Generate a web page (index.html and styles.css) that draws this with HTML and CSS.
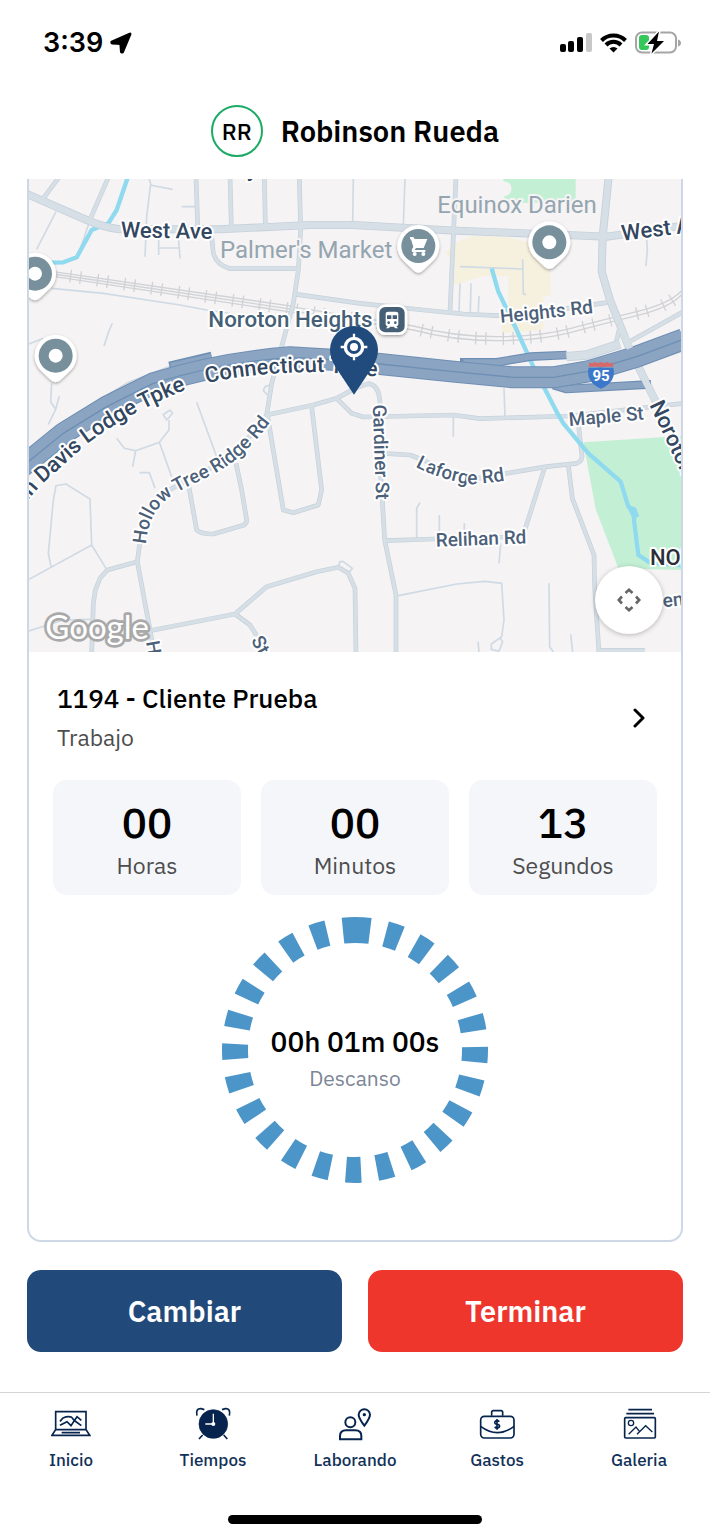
FILE: index.html
```html
<!DOCTYPE html>
<html lang="es">
<head>
<meta charset="utf-8">
<meta name="viewport" content="width=device-width, initial-scale=1">
<title>Laborando</title>
<link rel="stylesheet" href="styles.css">
</head>
<body>
<div class="app">
  <div class="status-bar">
    <div class="status-time">
      <span>3:39</span>
      <svg width="22" height="22" viewBox="0 0 22 22" aria-hidden="true"><path d="M20 2 12.500 20 11.500 20 10.800 11.400 2 11 1.800 10.200Z" fill="#000" stroke="#000" stroke-width="3" stroke-linejoin="round"/></svg>
    </div>
    <svg width="122" height="24" viewBox="559 31 122 24" aria-hidden="true">
      <rect x="560" y="44" width="6" height="8" rx="2"/>
      <rect x="568" y="41" width="6" height="11" rx="2"/>
      <rect x="577" y="37" width="6" height="15" rx="2"/>
      <rect x="586" y="33" width="6" height="19" rx="2" fill="#c8c8c8"/>
      <g fill="none" stroke="#000" stroke-width="4">
        <path d="M601.500 40.500a17 17 0 0 1 24 0"/>
        <path d="M606 45a10.500 10.500 0 0 1 15 0"/>
      </g>
      <path d="M609.500 48.500a6 6 0 0 1 8 0l-4 4Z"/>
      <rect x="636" y="32.500" width="40" height="20" rx="6" fill="#fff" stroke="#a5a5a5" stroke-width="2"/>
      <path d="M678 39.500q3 1 3 3.500t-3 3.500Z" fill="#a5a5a5"/>
      <rect x="639" y="35" width="10" height="15" rx="3" fill="#34c759"/>
      <path d="M659 31.500 647.500 44h6.500l-2.500 9.500L664 41h-7Z" stroke="#fff" stroke-width="3" paint-order="stroke"/>
    </svg>
  </div>

  <header class="profile">
    <span class="avatar">RR</span>
    <h1 class="profile-name">Robinson Rueda</h1>
  </header>

  <main class="content">
    <section class="card">
      <div class="map">
        <svg class="map-canvas" viewBox="27 27 1956 1419" role="img" aria-label="Mapa de Noroton Heights">
          <defs>
            <g id="avenues">
              <path d="M0 63 27 75 200 150Q250 172 300 178H600L870 165H1000L1310 182 1640 195 1760 200 1983 168"/>
              <path d="M1766 20 1748 200 1745 305 1770 390 1830 540 1905 690 1990 860"/>
            </g>
            <g id="streets">
              <path d="M118 20 70 85M266 20 205 160M528 20 533 165M630 20 634 168M733 20 736 165M838 20 842 180 835 300 820 400 785 530 755 640 740 735M1308 20 1290 425"/>
              <path d="M575 200 580 250Q590 285 630 296H832M830 373 1020 400 1210 420 1330 432 1430 437 1540 430 1760 398"/>
              <path d="M740 735Q690 810 600 880 500 930 430 970 370 1020 358 1130L352 1175 390 1380 402 1450"/>
              <path d="M352 1175 262 1200 240 1225 226 1260 220 1300 215 1450"/>
              <path d="M740 735 880 705 950 685 1005 655 1045 641Q1078 645 1080 700L1078 850 1087 990 1094 1110 1128 1275V1450"/>
              <path d="M950 685 995 730 1030 741 1300 735 1380 746 1650 738 1990 700"/>
              <path d="M875 710 905 960 895 1005 820 1028 790 1020 742 735"/>
              <path d="M505 940 530 1080Q545 1093 580 1092L670 1066Q681 1060 680 1050L665 960 648 880"/>
              <path d="M1090 850 1170 855 1210 870 1300 915 1390 925 1460 910 1580 890 1670 880Q1690 872 1685 850L1675 760"/>
              <path d="M1575 890 1513 1085M1094 1112 1240 1107 1510 1100M1645 885 1657 985 1722 1155 1724 1250 1737 1450M1737 1441H1875"/>
              <path d="M390 1382 645 1332 740 1250 890 1205 955 1192 985 1210 1005 1255 1008 1450M645 1332 690 1365 712 1400"/>
              <path d="M1797 480 1787 525M1820 520 1990 425M27 842 130 760 330 640 460 590"/>
            </g>
            <g id="marker">
              <path d="M0 80Q-9 80-18 70L-46 43A63 63 0 1 1 46 43L18 70Q9 80 0 80Z" fill="#fff" filter="url(#soft)"/>
              <circle r="51" fill="#78909c"/>
            </g>
            <filter id="soft" x="-30%" y="-30%" width="160%" height="160%"><feDropShadow dx="0" dy="4" stdDeviation="4" flood-color="#000" flood-opacity=".35"/></filter>
            <path id="curve-tpke" d="M-135 1170 15 1000 65 943 200 822Q330 725 499 659"/>
            <path id="curve-conn" d="M560 640Q700 606 912 606L1120 624"/>
            <path id="curve-hollow" d="M378 1123C388 1000 455 972 545 930S680 850 760 745"/>
            <path id="curve-laforge" d="M1186 890Q1250 925 1345 943 1400 942 1480 928"/>
          </defs>

          <rect x="27" y="27" width="1956" height="1419" fill="#f5f3f4"/>
          <path d="M1450 20H1667V95L1450 100 1452 80Q1477 75 1474 50 1470 35 1450 34Z" fill="#c3f0d4"/>
          <path d="M1690 817 1983 798V1200L1795 1195 1727 1017Z" fill="#c3f0d4"/>
          <path d="M1305 220 1355 198 1460 200 1530 218 1590 300 1593 375 1570 380V480L1445 490 1440 420 1465 415V318H1390L1302 345 1305 275 1275 250Z" fill="#f6f0de"/>

          <g class="lane">
            <path d="M108 125 50 238M205 165 175 255M387 27 392 40 380 140 375 260M390 45 458 58M485 110H525M416 205V255M416 234H478M475 200 480 265M1000 27 998 160M1155 27 1150 165"/>
            <path d="M95 355 250 370 480 405 560 420 640 432M277 460 268 480 252 528M27 522 70 505M95 640 92 695 107 718 85 763M107 718 118 678"/>
            <path d="M27 1228 215 1125 210 987 138 942 108 947 100 990 85 1150 93 1190M215 1125 258 1195M27 1383 130 1350 212 1348"/>
            <path d="M290 805 313 835 347 842 338 890M347 842 418 817 447 780V750M418 817 455 920M358 908H388L405 955M430 735 440 750 458 730 450 720 428 735M530 697 590 860"/>
            <path d="M750 645 735 650 730 662 742 675M955 1190 960 1175H970L997 1195 985 1210"/>
            <path d="M1300 740V800M1452 655 1455 740M1190 1105V1015L1200 998M1258 1035V1090M1333 1060V1090M1442 1120 1437 1180"/>
            <path d="M1135 1277 1310 1242 1395 1234 1445 1240 1452 1350 1445 1400 1414 1422V1438L1437 1444 1448 1415 1440 1405M1587 1240 1589 1430 1600 1446M1652 1393 1658 1446M1374 1415 1377 1446"/>
            <path d="M1320 290 1508 297M1508 268 1510 372 1518 374M1320 340 1317 425M1353 340 1351 425M1377 378 1375 425M1880 205 1882 240 1878 288"/>
          </g>

          <path class="river" d="M324 20 290 120 265 160 215 180 170 262 130 277 95 278"/>
          <g class="rail">
            <path d="M100 305 825 410M100 312 825 419M100 319 825 428"/>
            <path d="M825 412 1180 468Q1300 500 1430 500T1650 476 1850 425 1990 355M825 424 1180 480Q1300 512 1430 512T1650 488 1850 437 1990 367"/>
            <path class="rail-ties" d="M150 318 825 419 1180 474Q1300 506 1430 506T1650 482 1850 431 1990 361"/>
          </g>

          <use href="#streets" class="street-edge"/>
          <use href="#avenues" class="avenue-edge"/>
          <use href="#streets" class="street-fill"/>
          <use href="#avenues" class="avenue-fill"/>
          <path class="river" d="M1415 295 1435 365 1490 480 1540 590 1615 735 1630 760 1705 850 1802 935 1825 1010 1845 1022 1842 1050 1855 1155 1890 1178 1983 1186"/>
          <path d="M1822 1012 1845 1010 1858 1038 1838 1048Z" fill="#8fdaee"/>

          <g fill="none" stroke-linejoin="round">
            <path d="M1320 577H1430L1530 560 1640 555M1600 645 1640 657 1893 643M448 588 575 558" stroke="#6e8fb4" stroke-width="26"/>
            <path d="M1330 577H1430L1530 560 1640 555M1600 645 1640 657 1890 643M452 588 575 560" stroke="#8ba4c2" stroke-width="19"/>
            <path d="M1640 560 1700 555 1800 522" stroke="#c8d2db" stroke-width="28"/>
            <path d="M1640 560 1700 555 1800 522" stroke="#d6dfe6" stroke-width="23"/>
            <path d="M0 895 130 790 260 710 400 640Q600 578 810 562L950 570 1080 582 1300 605 1480 622H1600L1700 605 1850 560 1990 508" stroke="#6e8fb4" stroke-width="66"/>
            <path d="M0 895 130 790 260 710 400 640Q600 578 810 562L950 570 1080 582 1300 605 1480 622H1600L1700 605 1850 560 1990 508" stroke="#8ba4c2" stroke-width="60"/>
            <path d="M0 895 130 790 260 710 400 640Q600 578 810 562L950 570 1080 582 1300 605 1480 622H1600L1700 605 1850 560 1990 508" stroke="#6e8fb4" stroke-width="4"/>
            <path d="M1815 500 1830 535" stroke="#d6dfe6" stroke-width="20"/>
            <path d="M1864 608 1905 690" stroke="#d6dfe6" stroke-width="20"/>
          </g>

          <g class="label label-major">
            <text x="302" y="202" transform="rotate(1 302 202)">West Ave</text>
            <text x="1807" y="212" transform="rotate(-7 1807 212)">West Ave</text>
            <text text-anchor="end"><textPath href="#curve-tpke" startOffset="100%">John Davis Lodge Tpke</textPath></text>
            <text><textPath href="#curve-conn">Connecticut Tpke</textPath></text>
            <text x="1888" y="704" transform="rotate(65 1888 704)">Noroton Ave</text>
            <text x="680" y="18">y</text>
          </g>
          <text class="label label-station" x="565" y="472">Noroton Heights</text>
          <g class="label label-street">
            <text x="1442" y="459" transform="rotate(-6 1442 459)">Heights Rd</text>
            <text x="1648" y="768" transform="rotate(-5 1648 768)">Maple St</text>
            <text x="1058" y="704" transform="rotate(88 1058 704)">Gardiner St</text>
            <text><textPath href="#curve-laforge">Laforge Rd</textPath></text>
            <text x="1248" y="1130" transform="rotate(-2 1248 1130)">Relihan Rd</text>
            <text><textPath href="#curve-hollow">Hollow Tree Ridge Rd</textPath></text>
            <text x="378" y="1416" transform="rotate(80 378 1416)">Hollow</text>
            <text x="692" y="1410" transform="rotate(62 692 1410)">St</text>
            <text x="1930" y="1312" transform="rotate(-6 1930 1312)">en</text>
          </g>
          <text class="label label-town" x="1890" y="1185">NOROTON</text>
          <g class="label label-place">
            <text x="600" y="263">Palmer's Market</text>
            <text x="1252" y="130">Equinox Darien</text>
          </g>

          <use href="#marker" x="107" y="557"/><circle cx="107" cy="557" r="21" fill="#fff"/>
          <use href="#marker" x="45" y="311"/><circle cx="45" cy="311" r="21" fill="#fff"/>
          <use href="#marker" x="1588" y="217"/><circle cx="1588" cy="217" r="21" fill="#fff"/>
          <use href="#marker" x="1195" y="228"/>
          <g fill="#fff">
            <path d="M1170 201H1180L1184 207H1222L1211 234H1188L1184 240H1216V246H1177Q1172 243 1180 231L1173 208H1170Z"/>
            <circle cx="1184" cy="252" r="6"/><circle cx="1210" cy="252" r="6"/>
          </g>

          <rect x="1074" y="407" width="84" height="84" rx="22" fill="#455f76" stroke="#fff" stroke-width="8" filter="url(#soft)"/>
          <path d="M1097 432Q1097 425 1105 425H1127Q1135 425 1135 432V463Q1135 468 1129 469L1134 475H1126L1121 470H1111L1106 475H1098L1103 469Q1097 468 1097 463Z" fill="#fff"/>
          <path d="M1101 436H1114V447H1101ZM1118 436H1131V447H1118Z" fill="#455f76"/>
          <circle cx="1106" cy="458" r="4" fill="#455f76"/><circle cx="1126" cy="458" r="4" fill="#455f76"/>

          <path d="M1708 577Q1716 583 1724 575 1735 583 1743 575 1751 583 1762 575 1770 583 1778 577L1780 590H1706Z" fill="#d8696b"/>
          <path d="M1706 593H1780Q1790 635 1743 656 1696 635 1706 593Z" fill="#3b78cc"/>
          <text class="shield" x="1743" y="634">95</text>

          <path d="M1002 674 946 590Q930 565 930 540A72 72 0 0 1 1074 540Q1074 565 1058 590Z" fill="#204b7c"/>
          <g fill="none" stroke="#fff">
            <circle cx="1002" cy="531" r="26" stroke-width="10"/>
            <path d="M1002 491V510M1002 552V571M962 531H981M1023 531H1042" stroke-width="7"/>
          </g>
          <circle cx="1002" cy="531" r="12" fill="#fff"/>

          <text class="google" x="76" y="1406">Google</text>
        </svg>
        <button class="map-control" type="button" aria-label="Mover el mapa">
          <svg width="24" height="24" viewBox="0 0 24 24" fill="none" stroke="#666" stroke-width="2.600" aria-hidden="true"><path d="M8.500 5 12 1.800 15.500 5M8.500 19 12 22.200 15.500 19M5 8.500 1.800 12 5 15.500M19 8.500 22.200 12 19 15.500"/></svg>
        </button>
      </div>

      <a class="client" href="#cliente">
        <span class="client-text">
          <span class="client-name">1194 - Cliente Prueba</span>
          <span class="client-kind">Trabajo</span>
        </span>
        <svg width="12" height="20" viewBox="0 0 12 20" fill="none" stroke="#000" stroke-width="3" stroke-linecap="round" stroke-linejoin="round" aria-hidden="true"><path d="M2 2 10 10 2 18"/></svg>
      </a>

      <div class="stats">
        <div class="stat"><span class="stat-value">00</span><span class="stat-label">Horas</span></div>
        <div class="stat"><span class="stat-value">00</span><span class="stat-label">Minutos</span></div>
        <div class="stat"><span class="stat-value">13</span><span class="stat-label">Segundos</span></div>
      </div>

      <div class="break-timer">
        <svg class="ring" viewBox="0 0 266 266" aria-hidden="true">
          <circle cx="133" cy="133" r="120" pathLength="360" transform="rotate(-90 133 133)" fill="none" stroke="#4c95c9" stroke-width="26" stroke-dasharray="7.200 7.560"/>
        </svg>
        <div class="break-text">
          <span class="break-value">00h 01m 00s</span>
          <span class="break-label">Descanso</span>
        </div>
      </div>
    </section>

    <div class="actions">
      <button class="action action-change" type="button">Cambiar</button>
      <button class="action action-finish" type="button">Terminar</button>
    </div>
  </main>

  <nav class="tabs">
    <a class="tab" href="#inicio">
      <svg class="tab-icon" viewBox="152 50 120 102" stroke-width="5">
        <path d="M166 118V64H257V118M166 118H257L268 135H155ZM184 127H239"/>
        <path d="M179 93 188 83Q204 76 214 81L222 91 212 106 200 94 179 105M222 91 230 79 243 90M224 92 243 106"/>
      </svg>
      <span>Inicio</span>
    </a>
    <a class="tab" href="#tiempos">
      <svg class="tab-icon" viewBox="579 50 120 102" stroke-width="5">
        <circle cx="640" cy="101" r="43" fill="#06244d" stroke-width="2"/>
        <path d="M591 76Q586 54 603 55L613 58M688 76Q693 54 676 55L666 58M608 134 597 146M671 134 682 146"/>
        <path d="M640 70V101H616" stroke="#fff" stroke-width="4"/>
        <circle cx="640" cy="101" r="6" fill="#fff" stroke="none"/>
      </svg>
      <span>Tiempos</span>
    </a>
    <a class="tab" href="#laborando">
      <svg class="tab-icon" viewBox="1005 50 120 102" stroke-width="6">
        <circle cx="1051" cy="96" r="15"/>
        <path d="M1020 147V137Q1020 120 1038 120H1066Q1084 120 1084 137V147Z"/>
        <path d="M1093 106Q1076 83 1076 73A17 16 0 0 1 1110 73Q1110 83 1093 106Z"/>
        <circle cx="1093" cy="73" r="5" fill="#06244d" stroke="none"/>
      </svg>
      <span>Laborando</span>
    </a>
    <a class="tab" href="#gastos">
      <svg class="tab-icon" viewBox="381 50 120 102" stroke-width="5">
        <rect x="392" y="78" width="100" height="65" rx="11"/>
        <path d="M425 76V66Q425 61 430 61H453Q458 61 458 66V76M392 108Q442 146 492 108"/>
        <path d="M448 94Q441 88 435 94 432 101 442 102 451 104 448 110 441 116 434 110M441 86V118"/>
      </svg>
      <span>Gastos</span>
    </a>
    <a class="tab" href="#galeria">
      <svg class="tab-icon" viewBox="807 50 120 102" stroke-width="5">
        <rect x="824" y="82" width="92" height="61" rx="3"/>
        <path d="M835 58H906M829 70H912"/>
        <circle cx="843" cy="98" r="8" stroke-width="4"/>
        <path d="M836 132 858 110 869 124M861 132 887 106 907 125" stroke-width="4"/>
      </svg>
      <span>Galeria</span>
    </a>
  </nav>
  <div class="home-indicator"></div>
</div>
</body>
</html>
```
FILE: styles.css
```css
* { box-sizing: border-box; }

body {
  margin: 0;
  background: #fff;
  color: #000;
  font-family: "IBM Plex Sans", Roboto, "Noto Sans", sans-serif;
}

.app {
  display: flex;
  flex-direction: column;
  min-height: 100vh;
}

.status-bar {
  display: flex;
  align-items: center;
  justify-content: space-between;
  height: 84px;
  padding: 2px 29px 0 43px;
  font: 600 27px/32px Inter, sans-serif;
}

.status-time {
  display: flex;
  align-items: center;
  gap: 7px;
}

.profile {
  display: flex;
  align-items: center;
  justify-content: center;
  gap: 18px;
  height: 95px;
  padding-bottom: 2px;
}

.avatar {
  display: flex;
  align-items: center;
  justify-content: center;
  width: 52px;
  height: 52px;
  border: 2px solid #1bab66;
  border-radius: 50%;
  font-size: 23px;
  font-weight: 500;
}

.profile-name {
  margin: 0;
  font-size: 29px;
  font-weight: 600;
  line-height: 36px;
}

.content {
  flex: 1;
  padding: 0 27px 40px;
}

.card {
  border: 2px solid #cdd8e6;
  border-top: 0;
  border-radius: 0 0 14px 14px;
}

.map {
  position: relative;
  overflow: hidden;
}

.map-canvas {
  display: block;
  width: 100%;
  height: auto;
}

.map-control {
  position: absolute;
  right: 18px;
  bottom: 18px;
  display: flex;
  align-items: center;
  justify-content: center;
  width: 68px;
  height: 68px;
  padding: 0;
  border: 0;
  border-radius: 50%;
  background: #fff;
  box-shadow: 0 1px 5px rgba(0, 0, 0, .25);
}

.lane { fill: none; stroke: #cfdae4; stroke-width: 5; }
.river { fill: none; stroke: #8fdaee; stroke-width: 13; stroke-linejoin: round; }
.rail { fill: none; stroke: #d0d2d5; stroke-width: 4; }
.rail .rail-ties { stroke-width: 38; stroke-dasharray: 4 26 4 48; }
.street-edge, .avenue-edge, .street-fill, .avenue-fill { fill: none; stroke-linejoin: round; }
.street-edge { stroke: #c5d1db; stroke-width: 14; }
.street-fill { stroke: #d6dfe6; stroke-width: 10; }
.avenue-edge { stroke: #c5d1db; stroke-width: 24; }
.avenue-fill { stroke: #d6dfe6; stroke-width: 19; }

.label {
  font-family: Roboto, sans-serif;
  font-weight: 500;
  stroke: #fff;
  stroke-width: 12px;
  stroke-linejoin: round;
  paint-order: stroke;
}
.label-major { font-size: 66px; fill: #334760; }
.label-station { font-size: 67px; fill: #455f76; }
.label-street { font-size: 57px; fill: #4c6079; }
.label-town { font-size: 66px; fill: #2b3038; }
.label-place { font-size: 72px; font-weight: 400; fill: #94a5b0; stroke: #f5f3f4; }
.shield { font: 700 45px Roboto, sans-serif; fill: #fff; text-anchor: middle; }
.google {
  font: 400 99px Lato, sans-serif;
  fill: #fff;
  stroke: #a9a9a9;
  stroke-width: 16px;
  stroke-linejoin: round;
  paint-order: stroke;
}

.client {
  display: flex;
  align-items: center;
  justify-content: space-between;
  padding: 28px 36px 25px 28px;
  color: inherit;
  text-decoration: none;
}

.client-text {
  display: flex;
  flex-direction: column;
  gap: 3px;
}

.client-name {
  font-size: 26px;
  font-weight: 500;
  line-height: 36px;
}

.client-kind {
  color: #4d4d4d;
  font-size: 23px;
  line-height: 36px;
}

.stats {
  display: grid;
  grid-template-columns: repeat(3, 1fr);
  gap: 20px;
  padding: 0 24px;
}

.stat {
  display: flex;
  flex-direction: column;
  align-items: center;
  padding: 17px 8px 14px;
  border-radius: 14px;
  background: #f4f6fa;
}

.stat-value {
  font-size: 42px;
  font-weight: 500;
  line-height: 52px;
}

.stat-label {
  color: #4d4d4d;
  font-size: 23px;
  line-height: 32px;
}

.break-timer {
  display: grid;
  place-items: center;
  padding: 22px 0 57px;
}

.ring, .break-text { grid-area: 1 / 1; }

.ring {
  width: 266px;
  height: 266px;
}

.break-text {
  display: flex;
  flex-direction: column;
  align-items: center;
  padding-top: 16px;
}

.break-value {
  font-size: 28px;
  font-weight: 500;
  line-height: 40px;
}

.break-label {
  color: #7c8696;
  font-size: 21px;
  line-height: 32px;
}

.actions {
  display: grid;
  grid-template-columns: 1fr 1fr;
  gap: 26px;
  margin-top: 28px;
}

.action {
  height: 82px;
  border: 0;
  border-radius: 14px;
  color: #fff;
  font-family: inherit;
  font-size: 29px;
  font-weight: 600;
}

.action-change { background: #214a7b; }
.action-finish { background: #ee362d; }

.tabs {
  display: grid;
  grid-template-columns: repeat(5, 1fr);
  border-top: 1px solid #d5d5d5;
  padding-top: 14px;
}

.tab {
  display: flex;
  flex-direction: column;
  align-items: center;
  gap: 7px;
  color: #123158;
  font-size: 17px;
  font-weight: 500;
  line-height: 24px;
  text-decoration: none;
}

.tab-icon {
  width: 40px;
  height: 34px;
  fill: none;
  stroke: #06244d;
}

.home-indicator {
  width: 254px;
  height: 9px;
  margin: 43px auto 14px;
  border-radius: 5px;
  background: #000;
}
```
